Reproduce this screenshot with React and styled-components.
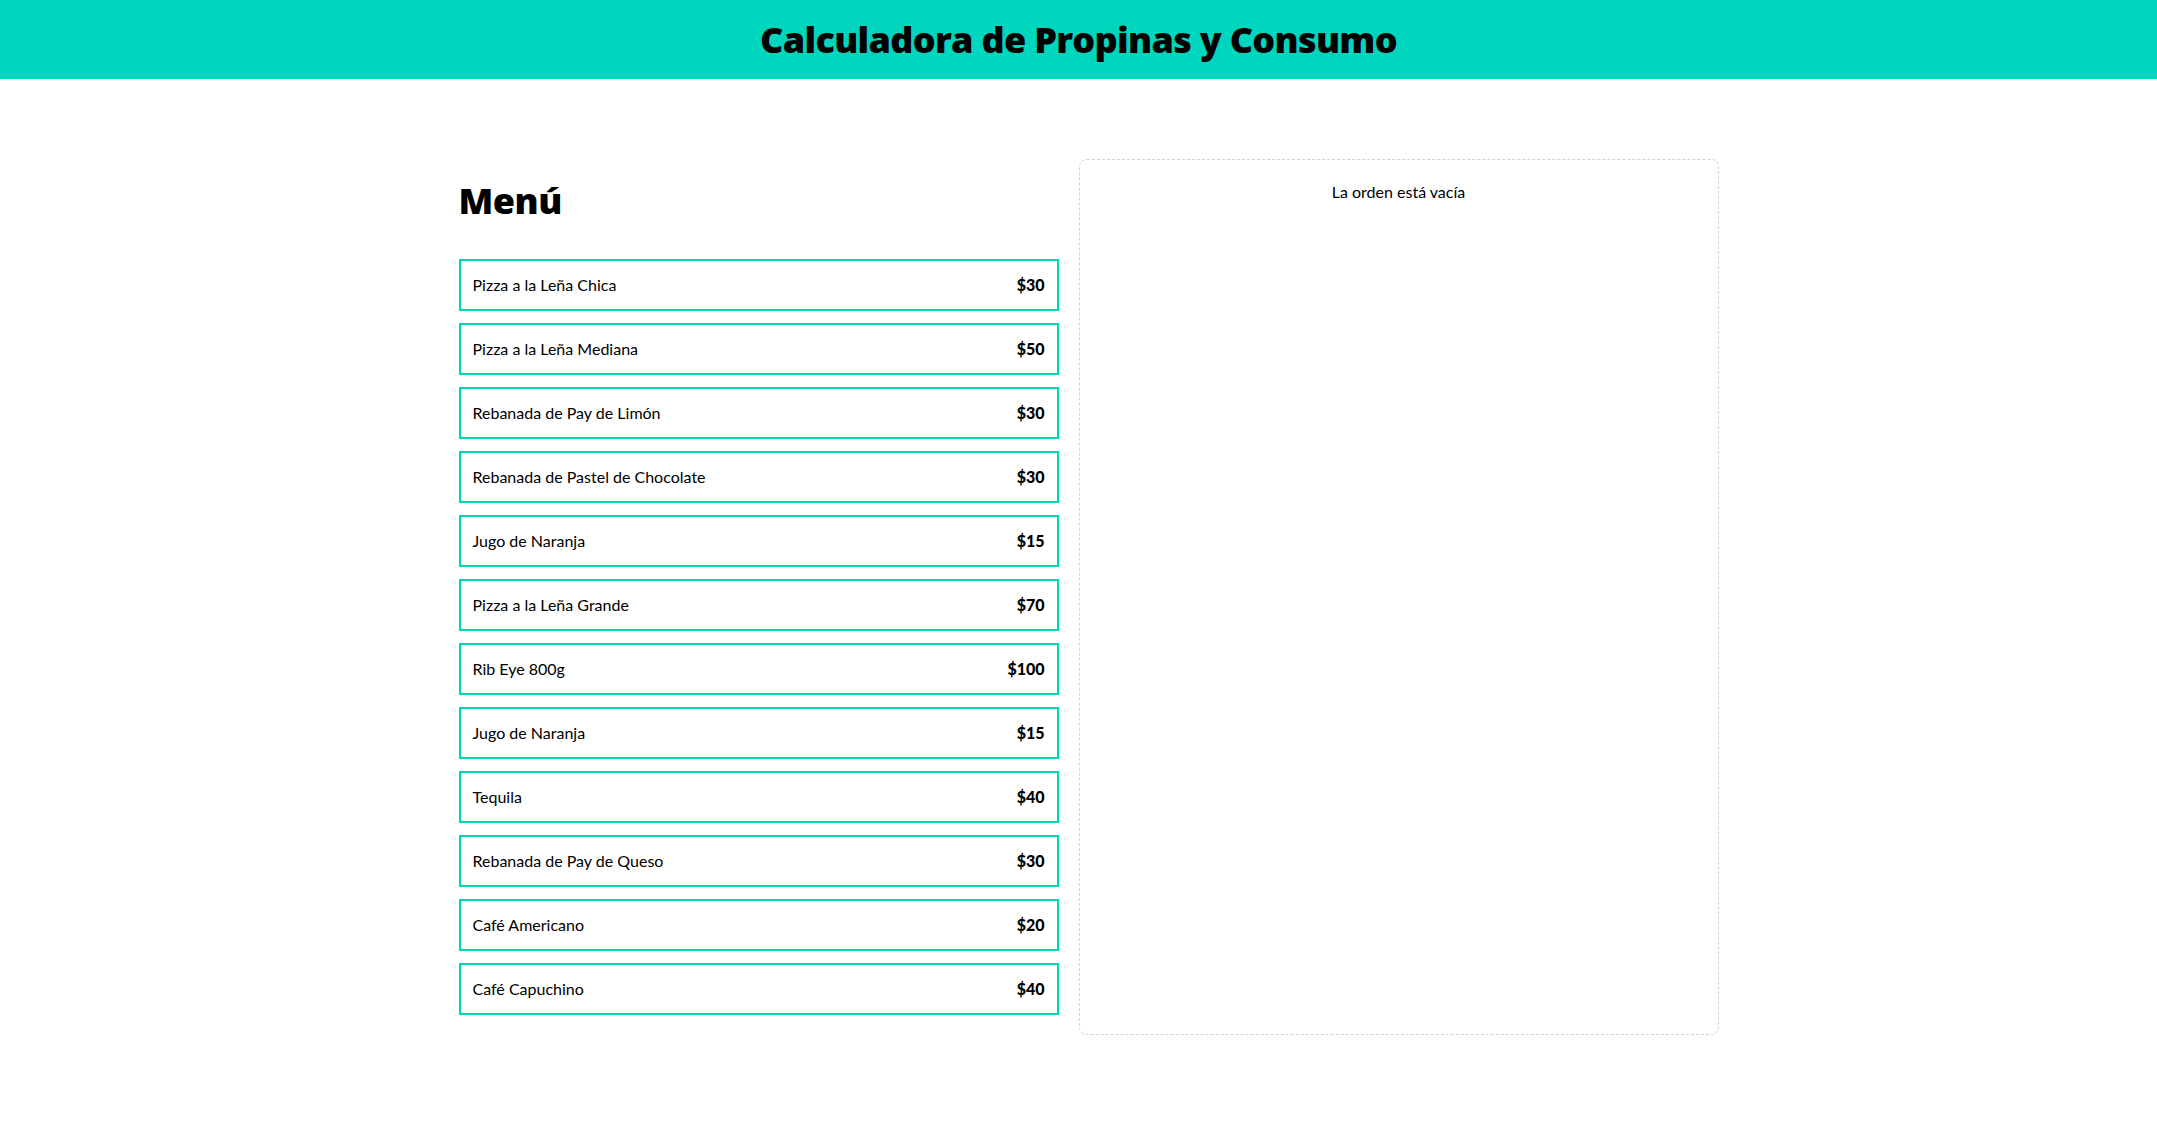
import styled, { createGlobalStyle } from 'styled-components';

const GlobalStyle = createGlobalStyle`
  * {
    box-sizing: border-box;
  }
  body {
    margin: 0;
    background: #fff;
    color: #000;
    font-family: Lato, 'Noto Sans', sans-serif;
    font-size: 16px;
    line-height: 24px;
  }
`;

const Header = styled.header`
  background: #00d5be;
  padding: 20px 0 19px;
`;

const Title = styled.h1`
  margin: 0;
  text-align: center;
  font-family: 'Open Sans', Lato, sans-serif;
  font-size: 36px;
  line-height: 40px;
  font-weight: 800;
  letter-spacing: -0.7px;
`;

const Main = styled.main`
  max-width: 1280px;
  margin: 0 auto;
  padding: 80px 0;
  display: grid;
  grid-template-columns: 1fr 1fr;
`;

const MenuColumn = styled.div`
  padding: 20px;
`;

const MenuHeading = styled.h2`
  margin: 0;
  font-family: 'Open Sans', Lato, sans-serif;
  font-size: 36px;
  line-height: 44px;
  font-weight: 800;
  letter-spacing: -0.5px;
  margin-bottom: -4px;
`;

const MenuList = styled.div`
  margin-top: 40px;
  display: flex;
  flex-direction: column;
  gap: 12px;
`;

const MenuItem = styled.button`
  display: flex;
  justify-content: space-between;
  width: 100%;
  padding: 12px;
  border: 2px solid #00d5be;
  background: #fff;
  font: inherit;
  color: inherit;
  text-align: left;
  cursor: pointer;

  &:hover {
    background: #ccfbf1;
  }
`;

const Price = styled.span`
  font-weight: 900;
`;

const OrderPanel = styled.div`
  border: 1px dashed #cbd5e1;
  border-radius: 8px;
  padding: 20px;
`;

const EmptyText = styled.p`
  margin: 0;
  text-align: center;
`;

const menu = [
  { id: 1, name: 'Pizza a la Leña Chica', price: 30 },
  { id: 2, name: 'Pizza a la Leña Mediana', price: 50 },
  { id: 3, name: 'Rebanada de Pay de Limón', price: 30 },
  { id: 4, name: 'Rebanada de Pastel de Chocolate', price: 30 },
  { id: 5, name: 'Jugo de Naranja', price: 15 },
  { id: 6, name: 'Pizza a la Leña Grande', price: 70 },
  { id: 7, name: 'Rib Eye 800g', price: 100 },
  { id: 8, name: 'Jugo de Naranja', price: 15 },
  { id: 9, name: 'Tequila', price: 40 },
  { id: 10, name: 'Rebanada de Pay de Queso', price: 30 },
  { id: 11, name: 'Café Americano', price: 20 },
  { id: 12, name: 'Café Capuchino', price: 40 },
];

export default function App() {
  return (
    <>
      <GlobalStyle />
      <Header>
        <Title>Calculadora de Propinas y Consumo</Title>
      </Header>
      <Main>
        <MenuColumn>
          <MenuHeading>Menú</MenuHeading>
          <MenuList>
            {menu.map((item) => (
              <MenuItem key={item.id}>
                <span>{item.name}</span>
                <Price>${item.price}</Price>
              </MenuItem>
            ))}
          </MenuList>
        </MenuColumn>
        <OrderPanel>
          <EmptyText>La orden está vacía</EmptyText>
        </OrderPanel>
      </Main>
    </>
  );
}
